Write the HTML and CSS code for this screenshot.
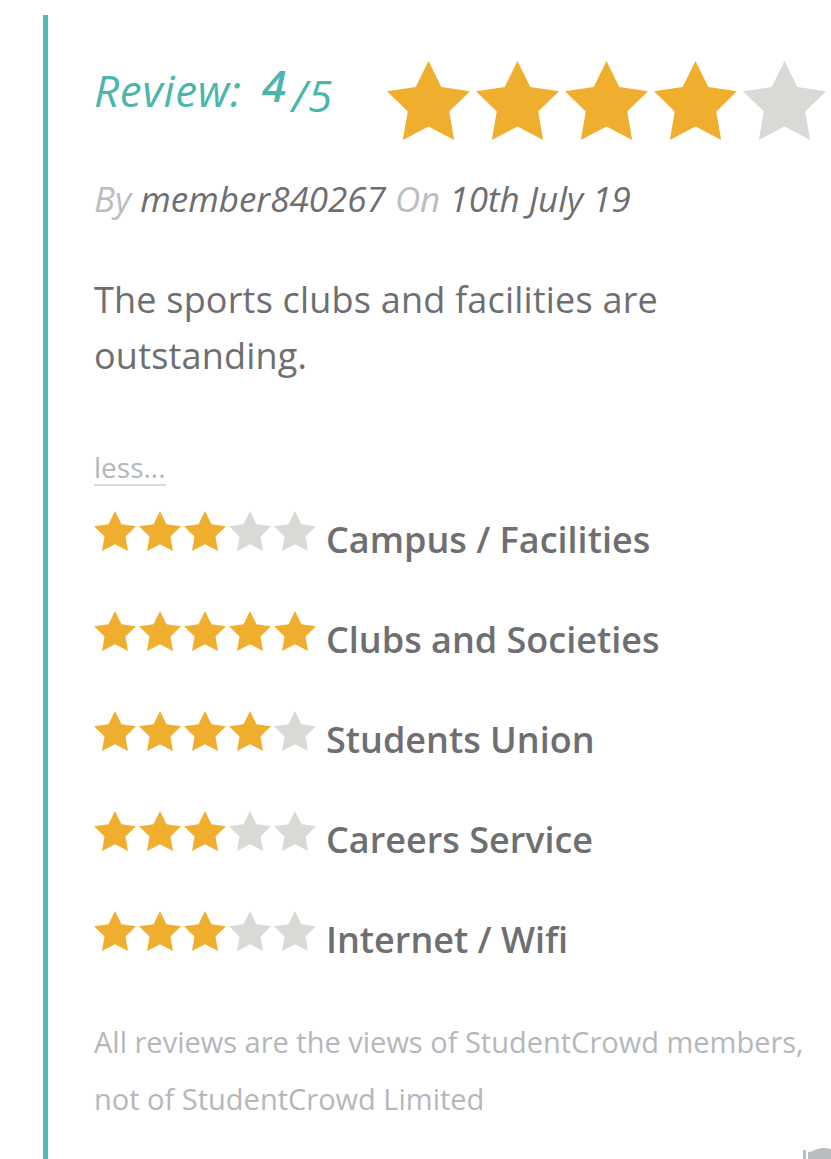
FILE: index.html
```html
<!DOCTYPE html>
<html lang="en">
<head>
<meta charset="utf-8">
<title>Review</title>
<link rel="stylesheet" href="styles.css">
</head>
<body>
<svg width="0" height="0" class="defs" aria-hidden="true">
  <defs>
    <polygon id="star" points="50,0 64.69,29.77 97.55,34.55 73.78,57.73 79.39,90.45 50,75 20.61,90.45 26.22,57.73 2.45,34.55 35.31,29.77"/>
  </defs>
</svg>
<main class="review">
  <header class="review-head">
    <h1 class="review-title">Review: <span class="score">4</span><span class="out-of">/5</span></h1>
    <div class="big-stars">
      <svg class="star big on" viewBox="2.45 0 95.1 90.45"><use href="#star"/></svg>
      <svg class="star big on" viewBox="2.45 0 95.1 90.45"><use href="#star"/></svg>
      <svg class="star big on" viewBox="2.45 0 95.1 90.45"><use href="#star"/></svg>
      <svg class="star big on" viewBox="2.45 0 95.1 90.45"><use href="#star"/></svg>
      <svg class="star big off" viewBox="2.45 0 95.1 90.45"><use href="#star"/></svg>
    </div>
  </header>

  <p class="byline"><span class="muted">By</span> member840267 <span class="muted">On</span> 10th July 19</p>

  <p class="body-text">The sports clubs and facilities are outstanding.</p>

  <a class="less" href="#">less...</a>

  <ul class="ratings">
    <li class="rating">
      <span class="small-stars">
        <svg class="star small on" viewBox="2.45 0 95.1 90.45"><use href="#star"/></svg>
        <svg class="star small on" viewBox="2.45 0 95.1 90.45"><use href="#star"/></svg>
        <svg class="star small on" viewBox="2.45 0 95.1 90.45"><use href="#star"/></svg>
        <svg class="star small off" viewBox="2.45 0 95.1 90.45"><use href="#star"/></svg>
        <svg class="star small off" viewBox="2.45 0 95.1 90.45"><use href="#star"/></svg>
      </span>
      <span class="rating-label">Campus / Facilities</span>
    </li>
    <li class="rating">
      <span class="small-stars">
        <svg class="star small on" viewBox="2.45 0 95.1 90.45"><use href="#star"/></svg>
        <svg class="star small on" viewBox="2.45 0 95.1 90.45"><use href="#star"/></svg>
        <svg class="star small on" viewBox="2.45 0 95.1 90.45"><use href="#star"/></svg>
        <svg class="star small on" viewBox="2.45 0 95.1 90.45"><use href="#star"/></svg>
        <svg class="star small on" viewBox="2.45 0 95.1 90.45"><use href="#star"/></svg>
      </span>
      <span class="rating-label">Clubs and Societies</span>
    </li>
    <li class="rating">
      <span class="small-stars">
        <svg class="star small on" viewBox="2.45 0 95.1 90.45"><use href="#star"/></svg>
        <svg class="star small on" viewBox="2.45 0 95.1 90.45"><use href="#star"/></svg>
        <svg class="star small on" viewBox="2.45 0 95.1 90.45"><use href="#star"/></svg>
        <svg class="star small on" viewBox="2.45 0 95.1 90.45"><use href="#star"/></svg>
        <svg class="star small off" viewBox="2.45 0 95.1 90.45"><use href="#star"/></svg>
      </span>
      <span class="rating-label">Students Union</span>
    </li>
    <li class="rating">
      <span class="small-stars">
        <svg class="star small on" viewBox="2.45 0 95.1 90.45"><use href="#star"/></svg>
        <svg class="star small on" viewBox="2.45 0 95.1 90.45"><use href="#star"/></svg>
        <svg class="star small on" viewBox="2.45 0 95.1 90.45"><use href="#star"/></svg>
        <svg class="star small off" viewBox="2.45 0 95.1 90.45"><use href="#star"/></svg>
        <svg class="star small off" viewBox="2.45 0 95.1 90.45"><use href="#star"/></svg>
      </span>
      <span class="rating-label">Careers Service</span>
    </li>
    <li class="rating">
      <span class="small-stars">
        <svg class="star small on" viewBox="2.45 0 95.1 90.45"><use href="#star"/></svg>
        <svg class="star small on" viewBox="2.45 0 95.1 90.45"><use href="#star"/></svg>
        <svg class="star small on" viewBox="2.45 0 95.1 90.45"><use href="#star"/></svg>
        <svg class="star small off" viewBox="2.45 0 95.1 90.45"><use href="#star"/></svg>
        <svg class="star small off" viewBox="2.45 0 95.1 90.45"><use href="#star"/></svg>
      </span>
      <span class="rating-label">Internet / Wifi</span>
    </li>
  </ul>

  <p class="disclaimer">All reviews are the views of StudentCrowd members, not of StudentCrowd Limited</p>
</main>
<div class="corner-tab" aria-hidden="true">
  <svg width="28" height="12" viewBox="0 0 28 12"><path d="M0 3 L3 3 L3 12 L0 12 Z M5 5 C10 5 14 1 20 1 C24 1 26 2 28 2 L28 12 L5 12 Z" fill="#b9bcc0"/></svg>
</div>
</body>
</html>
```

FILE: styles.css
```css
html, body {
  margin: 0;
  padding: 0;
  background: #ffffff;
}
body {
  font-family: "Open Sans", "Lato", sans-serif;
  color: #6e6e70;
  width: 831px;
  height: 1159px;
  overflow: hidden;
}
.defs {
  position: absolute;
  width: 0;
  height: 0;
}
.review {
  box-sizing: border-box;
  margin: 15px 0 0 43px;
  border-left: 5px solid #4fbab3;
  padding: 46px 0 0 46px;
  height: 1144px;
}
.review-head {
  display: flex;
  align-items: flex-start;
  justify-content: space-between;
  padding-right: 5px;
}
.review-title {
  margin: 4px 0 0;
  font-size: 44px;
  letter-spacing: 0.7px;
  font-style: italic;
  font-weight: 400;
  color: #4db5ab;
  line-height: 50px;
  white-space: nowrap;
}
.score {
  font-weight: 600;
  position: relative;
  top: -5px;
  margin-left: 8px;
}
.out-of {
  position: relative;
  top: 5px;
  margin-left: 5px;
}
.big-stars {
  display: flex;
  gap: 6px;
}
.star.big {
  width: 83px;
  height: 79px;
  display: block;
}
.star.on { fill: #f0ae2e; }
.star.off { fill: #d9d9d6; }

.byline {
  margin: 39px 0 0;
  font-size: 35px;
  font-style: italic;
  line-height: 40px;
  color: #6e6e70;
}
.byline .muted { color: #bbbdc0; }

.body-text {
  margin: 53px 0 0;
  font-size: 36px;
  letter-spacing: 0.2px;
  line-height: 56px;
  max-width: 660px;
  color: #6e6e70;
}
.less {
  display: block;
  width: fit-content;
  margin-top: 68px;
  font-size: 28px;
  line-height: 30px;
  color: #b4b6ba;
  text-decoration: none;
  border-bottom: 2px solid #d8dadd;
  padding-bottom: 2px;
}
.ratings {
  list-style: none;
  margin: 14px 0 0;
  padding: 0;
  display: flex;
  flex-direction: column;
  gap: 38px;
}
.rating {
  display: flex;
  align-items: center;
  height: 62px;
}
.small-stars {
  display: flex;
  gap: 3px;
}
.star.small {
  width: 42px;
  height: 40px;
  display: block;
}
.rating-label {
  margin-left: 10px;
  font-size: 36px;
  line-height: 36px;
  font-weight: 600;
  color: #6f6f71;
  position: relative;
  top: 9px;
}
.disclaimer {
  margin: 51px 0 0;
  font-size: 29px;
  line-height: 57px;
  color: #b5b7ba;
  max-width: 730px;
}
.corner-tab {
  position: fixed;
  right: 0;
  bottom: 0;
  width: 28px;
  height: 12px;
}
.corner-tab svg { display: block; }
```
